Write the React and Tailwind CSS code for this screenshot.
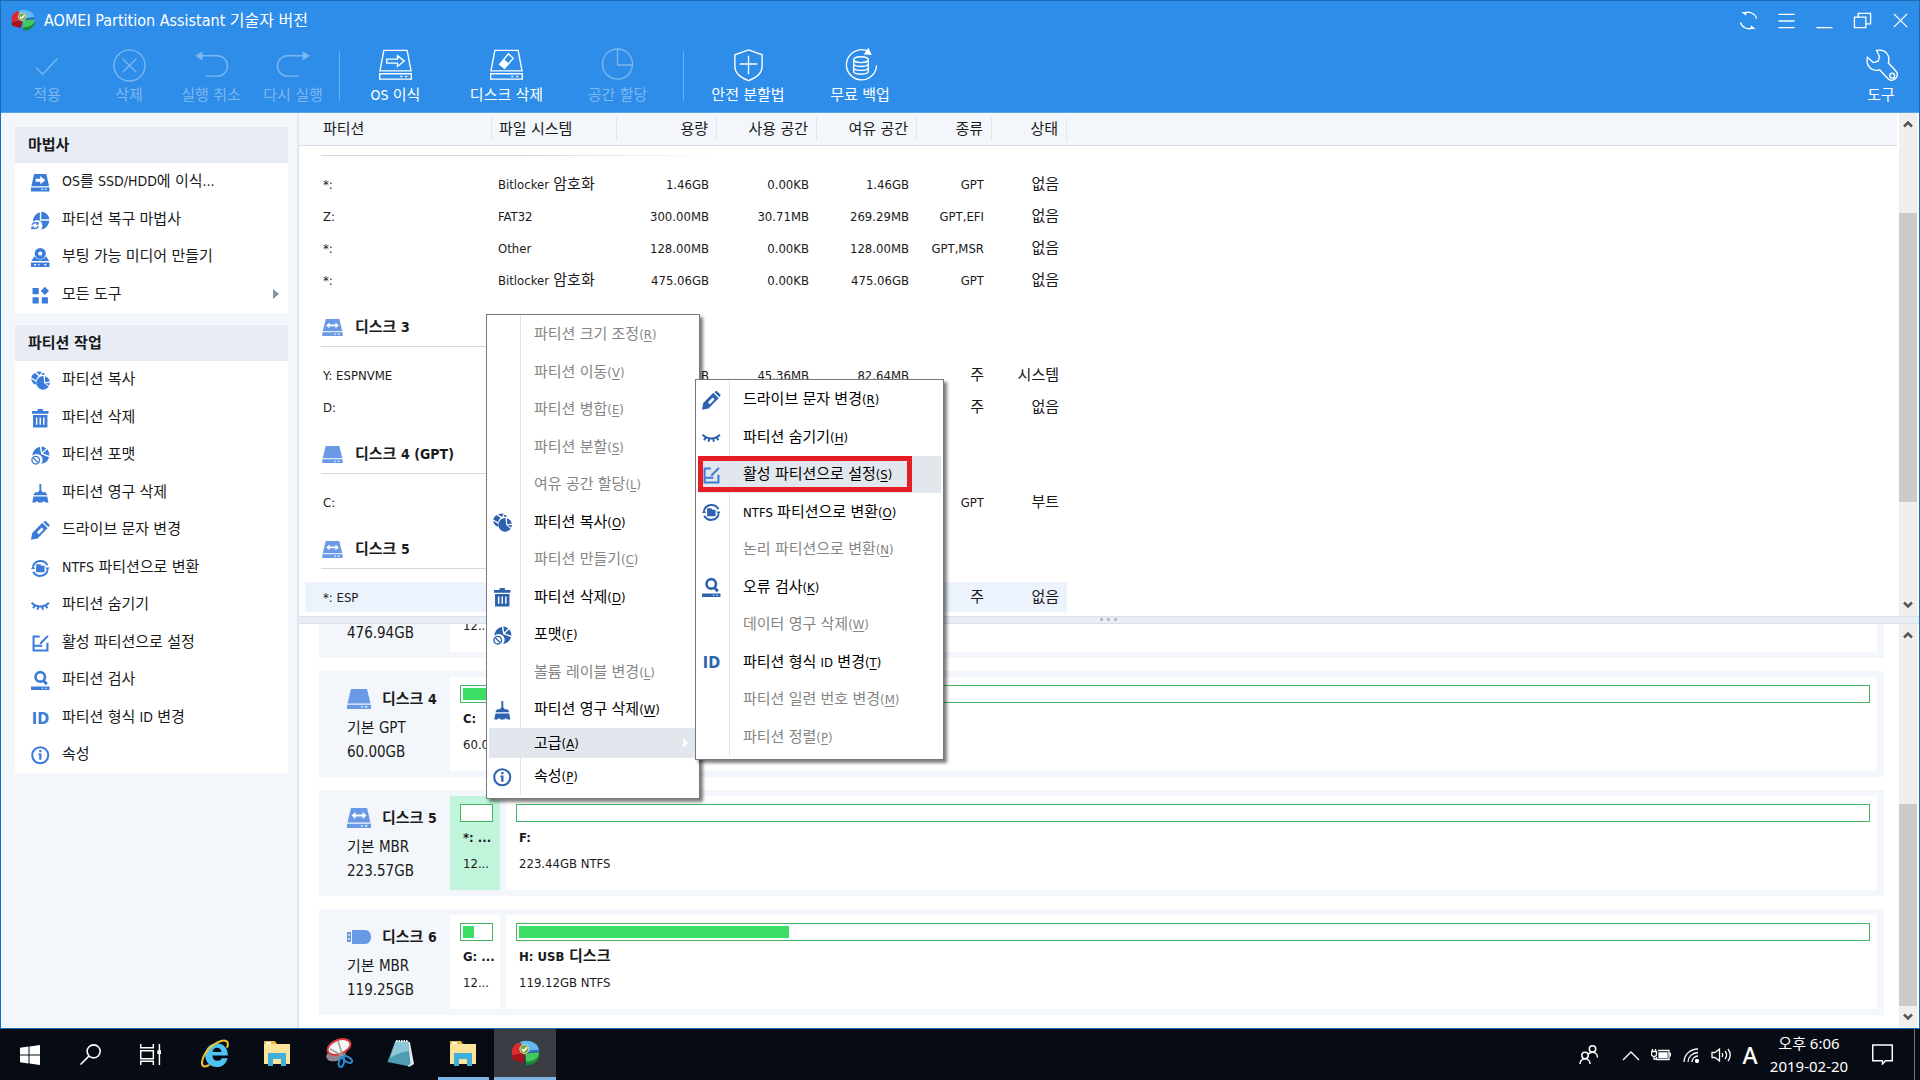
import React, { useState } from 'react';

const LATIN_RUN = /([\x21-\x7e]+(?: [\x21-\x7e]+)*)/;

// Latin letters are set a little smaller than the Hangul around them
const Mixed = ({ text, latin = 'text-[13px]' }) =>
  text.split(LATIN_RUN).map((part, i) =>
    i % 2 ? (
      <span key={i} className={latin}>{part}</span>
    ) : (
      part
    )
  );

const icons = {
  osDrive: (
    <>
      <path fill="currentColor" fillRule="evenodd" d="M3 1h12l2.600 12H.4zM4.500 5.500v3h4.500V11L14 7 9 3v2.500z" />
      <path fill="currentColor" fillRule="evenodd" d="M0 14h18v4H0zm10 1.400v1.200h1.600v-1.200zm3.400 0v1.200H15v-1.200z" />
    </>
  ),
  pieWizard: (
    <>
      <path fill="currentColor" d="M8.600 1.200v8.200h9.200A9 9 0 0 1 9.600 18 5 5 0 0 0 2 10.400a9 9 0 0 1 6.600-9.200z" />
      <path fill="currentColor" d="M10 .8a8.400 8.400 0 0 1 8 7.200h-8z" />
      <path fill="none" stroke="currentColor" strokeWidth="1.300" d="M1 13.600a3.200 3.200 0 0 1 5.400-1.200M7 14.600a3.200 3.200 0 0 1-5.400 1.400M6.800 10.800v2H5M1 18v-2.200h2" />
    </>
  ),
  media: (
    <>
      <path fill="currentColor" fillRule="evenodd" d="M9 0a5.400 5.400 0 1 1 0 10.800A5.400 5.400 0 0 1 9 0zm0 3.400a2 2 0 1 0 0 4 2 2 0 0 0 0-4z" />
      <path fill="currentColor" d="M3.200 8a7 7 0 0 0 11.600 0l2.800 4.600H.4z" />
      <path fill="currentColor" fillRule="evenodd" d="M0 14h18v4.500H0zm3 1.500v1.500h1.800v-1.500zm4 0v1.500h1.200v-1.500zm6 0v1.500h1.800v-1.500z" />
    </>
  ),
  tiles: (
    <path fill="currentColor" d="M1.500 2h6v6h-6zM1.500 11h6v6h-6zM10.500 11h6v6h-6zM13.500.8l4 4-4 4-4-4z" />
  ),
  copy: (
    <>
      <path fill="currentColor" d="M5 1.200A7 7 0 0 1 10.400 1L8.600 4zM3.800 2 7.400 4.800A7 7 0 0 0 5 9L.2 6.400A6.500 6.500 0 0 1 3.800 2zM.2 7.600l4.600 2.800.4 3A6.600 6.600 0 0 1 .2 7.600zM11.300 1.500a6 6 0 0 1 2.500 2L10.400 4z" />
      <path fill="currentColor" d="M12.200 5a6.600 6.600 0 1 0 5 10.400l-4.400-3.600z" />
      <path fill="currentColor" d="M13.600 5a6.600 6.600 0 0 1 4.700 5.200l-4.500.8zM14 12.200l4.400-.8a6 6 0 0 1-.7 2.600z" />
    </>
  ),
  trash: (
    <>
      <path fill="currentColor" d="M6.500 0h5v2H17v2.600H1V2h5.500z" />
      <path fill="currentColor" fillRule="evenodd" d="M2 5.800h14V18H2zm2.800 2.400v7.200h1.400V8.200zm3.500 0v7.200h1.400V8.200zm3.500 0v7.200h1.400V8.200z" />
    </>
  ),
  format: (
    <>
      <path fill="currentColor" d="M8.500.8 10 8l7.600 3A9 9 0 0 1 9.800 17.400 5.200 5.200 0 0 0 1.400 9.600 9 9 0 0 1 8.500.8zM10 .6a8.800 8.800 0 0 1 4.800 1.800L11 6zM15.800 3.200A9 9 0 0 1 18 9.600L11.600 7.200z" />
      <circle cx="4.600" cy="13.800" r="3.700" fill="none" stroke="currentColor" strokeWidth="1.300" />
      <path stroke="currentColor" strokeWidth="1.300" d="m2.400 11.600 4.400 4.400" />
    </>
  ),
  broom: (
    <path fill="currentColor" d="M8.200 0h1.800v6l1.400 2h2.800l1.800 3H2.200L4 8h2.800l1.400-2zM2.400 12.200h13.400L17 18h-3l-1.500-1.400L11 18H7.300l-1.500-1.400L4.300 18H1.200z" />
  ),
  pencil: (
    <path fill="currentColor" fillRule="evenodd" d="M12.200 1.200 13.400 0h1L18 3.600v1L16.800 5.800zM11 1.800 16.200 7 6.400 17 0 18.200 1.200 11.800zM10.400 6.400 5.800 11l1.800 1.800 4.600-4.600z" />
  ),
  convert: (
    <>
      <path fill="none" stroke="currentColor" strokeWidth="2" d="M2 7.200A7.600 7.600 0 0 1 16 6M16.200 11A7.600 7.600 0 0 1 2.200 12.400" />
      <path fill="currentColor" d="M0 9.800h4L2 6.400zM14 8.200h4l-2 3.600zM5 5.200H9l1.200 1.400h3v6.400H5z" />
    </>
  ),
  lash: (
    <path fill="none" stroke="currentColor" strokeWidth="2" d="M.6 6.600C5 11.400 13 11.400 17.400 6.600M3.800 9 2 12M7 10.400l-.6 3M11 10.400l.6 3M14.200 9l1.800 3" />
  ),
  edit: (
    <path fill="none" stroke="currentColor" strokeWidth="2" d="M8.500 2.500H2.500v13.500h13.500V8.500M2.500 11.500h8.500M9 9.500l7.500-7.700" />
  ),
  check: (
    <>
      <circle cx="9" cy="5.800" r="4.600" fill="none" stroke="currentColor" strokeWidth="2.600" />
      <path stroke="currentColor" strokeWidth="2.800" d="m12 9.200 3.400 3.600" />
      <path fill="currentColor" fillRule="evenodd" d="M0 15h18v3.400H0zm10.500 1.200v1h1.500v-1zm3.500 0v1h1.500v-1z" />
    </>
  ),
  info: (
    <>
      <circle cx="9" cy="9" r="7.800" fill="none" stroke="currentColor" strokeWidth="2" />
      <path fill="currentColor" d="M8 4h2.200v2.200H8zM7.200 7.400h3v6H8V9h-.8z" />
    </>
  ),
};

const Icon = ({ name }) => {
  if (name === 'id') {
    return <span className="w-[19px] text-center font-['DejaVu_Sans_Condensed'] text-[16px] leading-[19px] font-bold">ID</span>;
  }
  return (
    <svg viewBox="0 0 18.500 18.500" className="size-[19px] shrink-0" aria-hidden="true">
      {icons[name]}
    </svg>
  );
};

const Logo = ({ className }) => (
  <svg viewBox="0 0 26 24" className={className} aria-hidden="true">
    <path fill="#a8121a" d="M12 12 .8 14v4L10 21l2-5z" />
    <path fill="#e0282f" d="M12 11.500.8 14.300C-1 8 3 3.500 7.500 2z" />
    <path fill="#62b8f0" d="M7.800 1.900C15-1 24 2 25.500 9L13 11z" />
    <path fill="#2b6fb4" d="m15 10 10.500-1v3L16 13z" />
    <path fill="#45c95c" d="m13 12.500 12.500-1C26 17 21 21 13.500 21z" />
    <path fill="#178a38" d="M13.500 20c6 0 11-2.500 12-7v3c-1.500 4.500-6 7.500-12 7.500z" />
    <circle cx="12" cy="8.500" r="4.200" fill="#7ba53f" stroke="#d9e8c3" strokeWidth=".8" />
    <path fill="none" stroke="#fff" strokeWidth="1.600" d="m9.800 8.400 1.700 1.700 3-3.400" />
  </svg>
);

const DiskIcon = ({ kind, className }) => (
  <svg viewBox="0 0 24 20" className={className} aria-hidden="true">
    {kind === 'usb' ? (
      <>
        <path fill="#6a9ae6" d="M5 3h13c8 0 8 14 0 14H5z" />
        <path fill="#6a9ae6" fillRule="evenodd" d="M0 5h4v10H0zm1.200 2v1.800h1.500V7zm0 4v1.800h1.500V11z" />
      </>
    ) : (
      <>
        <path fill="#6a9ae6" d="M4 0h16l3.500 14.500H.5z" />
        <path fill="#6a9ae6" fillRule="evenodd" d="M0 15.700h24V20H0zm14 1.600v1.200h2v-1.200zm4 0v1.200h2.500v-1.200z" />
        {kind === 'mbr' && (
          <path fill="#fff" d="m4.500 7.500 4-3.500v2.500h7V4l4 3.500-4 3.500V8.500h-7V11z" />
        )}
      </>
    )}
  </svg>
);

const toolIcons = {
  apply: <path d="m5 19 7 7L27 10" />,
  discard: (
    <>
      <circle cx="17" cy="17" r="16" />
      <path d="m10 10 14 14M24 10 10 24" />
    </>
  ),
  undo: (
    <>
      <path d="M7 7h16a10.500 10.500 0 0 1 0 21H11" />
      <path fill="currentColor" d="M1.500 7 7 3.500v7z" />
    </>
  ),
  redo: (
    <>
      <path d="M27 7H11a10.500 10.500 0 0 0 0 21h12" />
      <path fill="currentColor" d="M32.500 7 27 3.500v7z" />
    </>
  ),
  migrate: (
    <>
      <path d="M5 1.500h24l4 21H1zM.7 25.500h32.600v5.500H.7zM22 28.300h2M27 28.300h2" />
      <path d="M8 10.500h11V7l7 5.500-7 5.500v-3.500H8z" />
    </>
  ),
  wipe: (
    <>
      <path d="M5 1.500h24l4 21H1zM.7 25.500h32.600v5.500H.7zM22 28.300h2M27 28.300h2" />
      <path d="m19 5 5 4.500-9 10.500-5-4z" />
      <path fill="currentColor" d="m14.500 11.500 4 3.500-3.500 4-4-3.500z" />
    </>
  ),
  allocate: (
    <>
      <circle cx="17" cy="15.500" r="15.500" />
      <path d="M17 0v16.500h15" />
    </>
  ),
  safe: <path d="M17 1 31 6v12c0 7-7 12-14 14.500C10 30 3 25 3 18V6zM17 7v19M8 15.500h18" />,
  backup: (
    <>
      <path d="M26 3A15.500 15.500 0 1 0 33.500 17" />
      <path fill="currentColor" d="m25 0 2.500 5.500-6-.5z" />
      <ellipse cx="17.500" cy="11" rx="7.500" ry="3" />
      <path d="M10 11v12c0 4 15 4 15 0V11M10 15c0 4 15 4 15 0M10 19c0 4 15 4 15 0" />
    </>
  ),
  tools: (
    <>
      <path d="M12 1.500c9-2 14.500 5 12 13l8 8.500c4 5-3 12-8 8L15 21.500C6.500 24 .5 17 2.500 8.500l6 5.500 5-1.500 1.500-4.500z" />
      <circle cx="28" cy="27.500" r="2.500" />
    </>
  ),
};

const ToolButton = ({ icon, label, disabled, className }) => (
  <button
    type="button"
    disabled={disabled}
    className={`flex flex-col items-center gap-[2px] ${disabled ? 'text-[#7cb7f1]' : 'text-white'} ${className}`}
  >
    <svg
      viewBox="-1 -1 36 35"
      className="h-[34px] w-[35px]"
      fill="none"
      stroke="currentColor"
      strokeWidth="1.400"
      aria-hidden="true"
    >
      {toolIcons[icon]}
    </svg>
    <span className="text-[15px] leading-[22px] whitespace-nowrap"><Mixed text={label} latin="text-[14px]" /></span>
  </button>
);

const Toolbar = () => (
  <div className="flex items-start pt-[9px] pb-[6px] pl-[5px]">
    <ToolButton icon="apply" label="적용" disabled className="w-[82px]" />
    <ToolButton icon="discard" label="삭제" disabled className="w-[82px]" />
    <ToolButton icon="undo" label="실행 취소" disabled className="w-[82px]" />
    <ToolButton icon="redo" label="다시 실행" disabled className="w-[82px]" />
    <div className="mt-[3px] ml-[5px] h-[50px] w-px bg-[#6cb0f2]" />
    <ToolButton icon="migrate" label="OS 이식" className="w-[111px]" />
    <ToolButton icon="wipe" label="디스크 삭제" className="w-[111px]" />
    <ToolButton icon="allocate" label="공간 할당" disabled className="w-[111px]" />
    <div className="mt-[3px] mr-2 ml-[10px] h-[50px] w-px bg-[#6cb0f2]" />
    <ToolButton icon="safe" label="안전 분할법" className="w-[112px]" />
    <ToolButton icon="backup" label="무료 백업" className="w-[112px]" />
    <ToolButton icon="tools" label="도구" className="ml-auto w-[76px]" />
  </div>
);

const captionIcons = [
  ['새로 고침', (
    <>
      <path d="M1.500 12a9 9 0 0 0 13 5.500M18.500 8a9 9 0 0 0-13-5.500" />
      <path fill="currentColor" stroke="none" d="M2.500 1h5v4zM17.500 19h-5v-4z" />
    </>
  )],
  ['메뉴', <path d="M1.500 3.500h17M1.500 10.500h17M1.500 17.500h17" />],
  ['최소화', <path d="M1.500 17.500h17" />],
  ['이전 크기로', <path d="M1.500 6.500h12v11h-12zM5.500 6V2.500h13v11H14" />],
  ['닫기', <path d="m3 3 14 14M17 3 3 17" />],
];

const TitleBar = () => (
  <div className="flex h-[38px] items-center pl-[9px] text-white">
    <Logo className="h-[22px] w-[26px]" />
    <h1 className="ml-2 pt-[2px] text-[16px] leading-[24px]">AOMEI Partition Assistant 기술자 버전</h1>
    <div className="ml-auto flex">
      {captionIcons.map(([label, shape]) => (
        <button key={label} type="button" aria-label={label} className="flex h-[38px] w-[38px] items-center justify-center">
          <svg viewBox="0 0 20 20" className="size-[19px]" fill="none" stroke="currentColor" strokeWidth="1.400">
            {shape}
          </svg>
        </button>
      ))}
    </div>
  </div>
);

const wizards = [
  { icon: 'osDrive', label: 'OS를 SSD/HDD에 이식...' },
  { icon: 'pieWizard', label: '파티션 복구 마법사' },
  { icon: 'media', label: '부팅 가능 미디어 만들기' },
  { icon: 'tiles', label: '모든 도구', more: true },
];

const operations = [
  { icon: 'copy', label: '파티션 복사' },
  { icon: 'trash', label: '파티션 삭제' },
  { icon: 'format', label: '파티션 포맷' },
  { icon: 'broom', label: '파티션 영구 삭제' },
  { icon: 'pencil', label: '드라이브 문자 변경' },
  { icon: 'convert', label: 'NTFS 파티션으로 변환' },
  { icon: 'lash', label: '파티션 숨기기' },
  { icon: 'edit', label: '활성 파티션으로 설정' },
  { icon: 'check', label: '파티션 검사' },
  { icon: 'id', label: '파티션 형식 ID 변경' },
  { icon: 'info', label: '속성' },
];

const SidePanel = ({ title, items }) => (
  <section>
    <h2 className="bg-[#e8ecf4] pl-[13px] text-[15px] leading-[36px] font-bold">{title}</h2>
    <ul className="bg-white">
      {items.map((item) => (
        <li key={item.label} className="h-[37px] even:h-[38px]">
          <button type="button" className="flex h-full w-full items-center pl-4 text-left text-[15px]">
            <span className="flex pt-[2px] text-[#3b7cd9]"><Icon name={item.icon} /></span>
            <span className="ml-[12px] whitespace-nowrap"><Mixed text={item.label} latin="text-[14px]" /></span>
            {item.more && (
              <span className="mr-[9px] ml-auto border-y-[5px] border-l-[6px] border-transparent border-l-[#8592a3]" />
            )}
          </button>
        </li>
      ))}
    </ul>
  </section>
);

const columns = [
  { label: '파티션', width: 'w-[193px]' },
  { label: '파일 시스템', width: 'w-[125px]' },
  { label: '용량', width: 'w-[100px]', right: true },
  { label: '사용 공간', width: 'w-[100px]', right: true },
  { label: '여유 공간', width: 'w-[100px]', right: true },
  { label: '종류', width: 'w-[75px]', right: true },
  { label: '상태', width: 'w-[75px]', right: true },
];

const groups = [
  {
    rows: [
      ['*:', 'Bitlocker 암호화', '1.46GB', '0.00KB', '1.46GB', 'GPT', '없음'],
      ['Z:', 'FAT32', '300.00MB', '30.71MB', '269.29MB', 'GPT,EFI', '없음'],
      ['*:', 'Other', '128.00MB', '0.00KB', '128.00MB', 'GPT,MSR', '없음'],
      ['*:', 'Bitlocker 암호화', '475.06GB', '0.00KB', '475.06GB', 'GPT', '없음'],
    ],
  },
  {
    disk: '디스크 3',
    kind: 'mbr',
    rows: [
      ['Y: ESPNVME', '', '128.00MB', '45.36MB', '82.64MB', '주', '시스템'],
      ['D:', '', '', '', '', '주', '없음'],
    ],
  },
  { disk: '디스크 4 (GPT)', kind: 'gpt', rows: [['C:', '', '', '', '', 'GPT', '부트']] },
  { disk: '디스크 5', kind: 'mbr', rows: [['*: ESP', '', '', '', '', '주', '없음']], selected: true },
];

const PartitionTable = () => (
  <table className="w-full table-fixed border-collapse text-[15px]">
    <thead className="h-[32px] border-b border-[#d5dce6] bg-[#f3f6fb]">
      <tr>
        {columns.map((col, i) => (
          <th key={col.label} className={`p-0 font-normal ${col.width}`}>
            <div
              className={`h-[24px] border-r border-[#e1e6ee] leading-[24px] ${
                col.right ? 'pr-[8px] text-right' : i === 0 ? 'pl-[24px] text-left' : 'pl-[7px] text-left'
              }`}
            >
              {col.label}
            </div>
          </th>
        ))}
        <th className="p-0" />
      </tr>
    </thead>
    {groups.map((group, g) => (
      <tbody key={g}>
        <tr>
          <th colSpan={8} className="p-0 pb-[12px] text-left">
            <div className={group.disk ? 'flex h-[50px] items-center pt-[13px] pl-[23px]' : 'h-[9px]'}>
              {group.disk && (
                <>
                  <DiskIcon kind={group.kind} className="h-[17px] w-[21px]" />
                  <span className="ml-3 font-bold"><Mixed text={group.disk} latin="text-[14px]" /></span>
                </>
              )}
            </div>
            <div className="ml-[22px] h-px w-[400px] bg-linear-to-r from-[#d3d9e3] from-50% to-white" />
          </th>
        </tr>
        {group.rows.map((row, r) => (
          <tr key={r} className="h-[32px]">
            {row.map((value, i) => (
              <td key={i} className="p-0">
                <div
                  className={`h-[30px] leading-[30px] whitespace-nowrap ${group.selected ? 'bg-[#edf3fd]' : ''} ${
                    i > 1 ? 'pr-[8px] text-right' : i === 0 ? 'ml-[6px] pl-[18px]' : 'pl-[6px]'
                  }`}
                >
                  <Mixed text={value} />
                </div>
              </td>
            ))}
          </tr>
        ))}
      </tbody>
    ))}
  </table>
);

const ScrollBar = ({ start, size }) => (
  <div className="mr-[2px] flex w-[18px] shrink-0 flex-col bg-[#efefef]">
    <button type="button" aria-label="위로" className="flex h-[22px] items-center justify-center text-[#555]">
      <svg viewBox="0 0 10 8" className="h-2 w-[10px]" fill="none" stroke="currentColor" strokeWidth="2.500">
        <path d="m1 6.500 4-4 4 4" />
      </svg>
    </button>
    <div className="flex-1">
      <div style={{ height: `${start}%` }} />
      <div className="bg-[#cbcbcb]" style={{ height: `${size}%` }} />
    </div>
    <button type="button" aria-label="아래로" className="flex h-[22px] items-center justify-center text-[#555]">
      <svg viewBox="0 0 10 8" className="h-2 w-[10px]" fill="none" stroke="currentColor" strokeWidth="2.500">
        <path d="m1 1.500 4 4 4-4" />
      </svg>
    </button>
  </div>
);

// the first disk is scrolled half out of view, only its last lines show
const disks = [
  {
    size: '476.94GB',
    parts: [{ size: '12...', used: 0, small: true }, { used: 0 }],
  },
  { name: '디스크 4', kind: 'gpt', type: '기본 GPT', size: '60.00GB', parts: [{ name: 'C:', size: '60.00GB', used: 20 }] },
  {
    name: '디스크 5',
    kind: 'mbr',
    type: '기본 MBR',
    size: '223.57GB',
    parts: [
      { name: '*: ...', size: '12...', used: 0, small: true, selected: true },
      { name: 'F:', size: '223.44GB NTFS', used: 0 },
    ],
  },
  {
    name: '디스크 6',
    kind: 'usb',
    type: '기본 MBR',
    size: '119.25GB',
    parts: [
      { name: 'G: ...', size: '12...', used: 42, small: true },
      { name: 'H: USB 디스크', size: '119.12GB NTFS', used: 20 },
    ],
  },
];

const DiskCard = ({ disk }) => (
  <article className="flex h-[106px] shrink-0 gap-[6px] bg-[#f3f6fb] py-[6px] pr-[7px]">
    <div className="w-[125px] pt-[7px] pl-[28px] text-[15px] leading-[24px]">
      <h3 className="mb-[2px] flex h-[30px] items-center gap-[11px] leading-[30px] font-bold whitespace-nowrap">
        {disk.name && (
          <>
            <DiskIcon kind={disk.kind} className="h-[20px] w-[24px] shrink-0" />
            <span><Mixed text={disk.name} latin="text-[14px]" /></span>
          </>
        )}
      </h3>
      <p className="h-[24px]">{disk.type}</p>
      <p>{disk.size}</p>
    </div>
    {disk.parts.map((part, i) => (
      <div
        key={i}
        className={`pt-[8px] pr-[7px] pl-[10px] text-[15px] leading-[24px] ${part.small ? 'w-[50px]' : 'flex-1'} ${
          part.selected ? 'bg-[#c0f5db]' : 'bg-white'
        }`}
      >
        <div className="h-[18px] border border-[#45b562] bg-white p-[2px]">
          <div className="h-full bg-[#3adf63]" style={{ width: `${part.used}%` }} />
        </div>
        <p className="mt-[3px] h-[24px] pl-[3px] font-bold whitespace-nowrap">
          <Mixed text={part.name ?? ''} />
        </p>
        <p className="mt-[2px] h-[24px] pl-[3px] whitespace-nowrap">
          <Mixed text={part.size ?? ''} />
        </p>
      </div>
    ))}
  </article>
);

const contextMenu = [
  { label: '파티션 크기 조정', hotkey: 'R', disabled: true },
  { label: '파티션 이동', hotkey: 'V', disabled: true },
  { label: '파티션 병합', hotkey: 'E', disabled: true },
  { label: '파티션 분할', hotkey: 'S', disabled: true },
  { label: '여유 공간 할당', hotkey: 'L', disabled: true },
  { label: '파티션 복사', hotkey: 'O', icon: 'copy' },
  { label: '파티션 만들기', hotkey: 'C', disabled: true },
  { label: '파티션 삭제', hotkey: 'D', icon: 'trash' },
  { label: '포맷', hotkey: 'F', icon: 'format' },
  { label: '볼륨 레이블 변경', hotkey: 'L', disabled: true },
  { label: '파티션 영구 삭제', hotkey: 'W', icon: 'broom' },
  { label: '고급', hotkey: 'A', submenu: true },
  { label: '속성', hotkey: 'P', icon: 'info' },
];

const advancedMenu = [
  { label: '드라이브 문자 변경', hotkey: 'R', icon: 'pencil' },
  { label: '파티션 숨기기', hotkey: 'H', icon: 'lash' },
  { label: '활성 파티션으로 설정', hotkey: 'S', icon: 'edit', marked: true },
  { label: 'NTFS 파티션으로 변환', hotkey: 'O', icon: 'convert' },
  { label: '논리 파티션으로 변환', hotkey: 'N', disabled: true },
  { label: '오류 검사', hotkey: 'K', icon: 'check' },
  { label: '데이터 영구 삭제', hotkey: 'W', disabled: true },
  { label: '파티션 형식 ID 변경', hotkey: 'T', icon: 'id' },
  { label: '파티션 일련 번호 변경', hotkey: 'M', disabled: true },
  { label: '파티션 정렬', hotkey: 'P', disabled: true },
];

const Menu = ({ items, className, label }) => (
  <ul
    role="menu"
    aria-label={label}
    className={`absolute border border-[#77797c] bg-white px-[2px] pt-px pb-[3px] text-[15px] shadow-[3px_3px_3px_rgba(0,0,0,0.5)] ${className}`}
  >
    {items.map((item) => (
      <li key={item.label} role="none" className={`relative ${item.submenu ? 'h-[30px]' : 'h-[37px] even:h-[38px]'}`}>
        <button
          type="button"
          role="menuitem"
          disabled={item.disabled}
          className={`flex h-full w-full items-center text-left ${item.disabled ? 'text-[#858585]' : 'text-black'} ${
            item.submenu || item.marked ? 'bg-[#e2e6ed]' : ''
          }`}
        >
          <span
            className={`flex h-full w-[32px] items-center border-r border-[#dfe3e9] pt-px pl-[4px] ${
              item.marked ? 'text-[#3b7cd9]' : 'text-[#2c62ae]'
            }`}
          >
            {item.icon && <Icon name={item.icon} />}
          </span>
          <span className="ml-[13px] whitespace-nowrap">
            <Mixed text={item.label} />
            <span className="text-[13px]">(<u className="underline-offset-2">{item.hotkey}</u>)</span>
          </span>
          {item.submenu && (
            <span className="mr-[9px] ml-auto border-y-[5px] border-l-[5px] border-transparent border-l-white" />
          )}
        </button>
        {item.marked && (
          <span className="pointer-events-none absolute top-0 left-0 h-[36px] w-[214px] border-[5px] border-[#e81c24]" />
        )}
      </li>
    ))}
  </ul>
);

const FolderIcon = () => (
  <svg viewBox="0 0 28 26" className="h-[26px] w-[28px]" aria-hidden="true">
    <path fill="#e9b83c" d="M1 1h11l2 3h13v6H1z" />
    <path fill="#fff" d="M3 2h5v2H3z" />
    <path fill="#fbe39a" d="M1 4h26v20H1z" />
    <path fill="#3fb0dc" d="M5 13h18v13h-5v-7h-8v7H5z" />
  </svg>
);

const taskbarApps = [
  {
    label: 'Internet Explorer',
    icon: (
      <svg viewBox="0 0 28 28" className="size-[29px]" aria-hidden="true">
        <path
          fill="#4cc3f1"
          fillRule="evenodd"
          d="M15 4c7 0 11 5 11 12H11c.3 3.500 2 5 4.700 5 2.300 0 3.600-1 4.300-2.500h5.700C24.500 23.500 21 27 15 27 8.500 27 4 22 4 15.500S8.500 4 15 4zm-3.900 8.500h8.600c-.4-2.800-2-4-4.300-4s-3.800 1.500-4.300 4z"
        />
        <path fill="none" stroke="#f2c230" strokeWidth="2" d="M25 8.500C28 2 23.500-.5 16.500 3 6 8 .5 18 1 24c.5 3.500 4 3 7 1" />
      </svg>
    ),
  },
  { label: '파일 탐색기', icon: <FolderIcon /> },
  {
    label: '캡처 도구',
    icon: (
      <svg viewBox="0 0 28 30" className="h-[30px] w-[28px]" fill="none" aria-hidden="true">
        <ellipse cx="11" cy="17" rx="10" ry="6" fill="#8f8790" transform="rotate(-15 11 17)" />
        <ellipse cx="14" cy="9" rx="12" ry="7" fill="#f5f5f5" stroke="#d63a3f" strokeWidth="2" transform="rotate(-22 14 9)" />
        <path stroke="#9a9a9a" strokeWidth="1.500" d="m13 3 5 16M5 11l15 8" />
        <ellipse cx="16.500" cy="24" rx="2.500" ry="5" stroke="#2d8bd0" strokeWidth="2" transform="rotate(15 16.500 24)" />
        <ellipse cx="22.500" cy="21.500" rx="2.500" ry="5" stroke="#2d8bd0" strokeWidth="2" transform="rotate(-60 22.500 21.500)" />
      </svg>
    ),
  },
  {
    label: '메모장',
    icon: (
      <svg viewBox="0 0 28 28" className="size-[28px]" aria-hidden="true">
        <path fill="#e4e9ea" d="m20 2 3 1.500L27 25l-5 3-3-3z" />
        <path fill="#4f9db2" d="M8.500 2H21l2.500 23-3 2L.5 23z" />
        <path fill="#8cc8d6" d="M8.500 2H21l1 10C16 12 8 16 3 19z" />
        <path stroke="#e8eef0" strokeWidth="2" strokeDasharray="1.500 1" d="M9 2h12" />
      </svg>
    ),
  },
  { label: '파일 탐색기 창', icon: <FolderIcon />, running: true },
  { label: 'AOMEI Partition Assistant', icon: <Logo className="h-[26px] w-[29px]" />, running: true, active: true },
];

const trayIcons = [
  ['숨겨진 아이콘 표시', <path d="m2 15 8-8 8 8" />],
  ['배터리', (
    <>
      <path d="M7 5.500h11v9H5.500V12M18.500 8.500h1v3" />
      <path fill="currentColor" d="M8 8h8v4.500H8z" />
      <path d="M.5 6.500h5V9a2.500 2.500 0 0 1-5 0zM1.500 6V4M4.500 6V4M3 11.500V14h3" />
    </>
  )],
  ['네트워크', (
    <>
      <path d="M3 17C3 10 9 4 17 4M7 17c0-5 4.500-9.500 10-9.500M11 17c0-3 2.500-6 6-6" />
      <circle cx="16" cy="16" r="1.500" fill="currentColor" />
    </>
  )],
  ['볼륨', <path d="M1 7.500h3L8.500 4v12L4 12.500H1zM11 8c1 1.500 1 2.500 0 4M14 6c2 2.500 2 5.500 0 8M17 4c3 4 3 8 0 12" />],
];

const Taskbar = () => (
  <footer className="flex h-[51px] shrink-0 bg-[#070c14] text-white">
    <button type="button" aria-label="시작" className="flex w-[60px] items-center justify-center">
      <svg viewBox="0 0 20 20" className="size-[20px]" fill="currentColor">
        <path d="m0 2.800 8.500-1.200v8H0zM9.500 1.500 20 0v9.600H9.500zM0 10.500h8.500v8L0 17.300zM9.500 10.500H20V20L9.500 18.600z" />
      </svg>
    </button>
    <button type="button" aria-label="검색" className="flex w-[60px] items-center justify-center">
      <svg viewBox="0 0 20 20" className="size-[21px]" fill="none" stroke="currentColor" strokeWidth="1.500">
        <circle cx="13" cy="7" r="6.200" />
        <path d="M8.500 11.500.5 19.500" />
      </svg>
    </button>
    <button type="button" aria-label="작업 보기" className="mr-[4px] flex w-[60px] items-center justify-center">
      <svg viewBox="0 0 20 20" className="size-[21px]" fill="none" stroke="currentColor" strokeWidth="1.400">
        <path d="M.7 0v3.500h12V0M.7 6.500h12v7.500h-12zM.7 20v-3.500h12V20M18.500 0v20" />
        <path fill="currentColor" stroke="none" d="M16.500 6h4v3.500h-4z" />
      </svg>
    </button>
    {taskbarApps.map((app) => (
      <button
        key={app.label}
        type="button"
        aria-label={app.label}
        className={`flex w-[62px] flex-col items-center ${app.active ? 'bg-[#3a3e44]' : ''}`}
      >
        <span className="flex flex-1 items-center">{app.icon}</span>
        <span className={`h-[3px] ${app.active ? 'w-full' : 'w-[51px]'} ${app.running ? 'bg-[#7fb5e6]' : ''}`} />
      </button>
    ))}
    <div className="ml-auto flex items-center">
      <button type="button" aria-label="피플" className="flex w-[54px] justify-center">
        <svg viewBox="0 0 20 20" className="size-[20px]" fill="none" stroke="currentColor" strokeWidth="1.500">
          <circle cx="13.500" cy="4" r="3.200" />
          <circle cx="6" cy="10.500" r="3.200" />
          <path d="M1 19c0-3 2-5.300 5-5.300s5 2.300 5 5.300M9 9.500c1-1.500 2.500-2.300 4.500-2.300 3 0 5 2.300 5 5.300" />
        </svg>
      </button>
      {trayIcons.map(([label, shape]) => (
        <button key={label} type="button" aria-label={label} className="flex w-[30px] justify-center">
          <svg viewBox="0 0 20 20" className="size-[20px]" fill="none" stroke="currentColor" strokeWidth="1.300">
            {shape}
          </svg>
        </button>
      ))}
      <button type="button" className="w-[28px] font-['Noto_Sans'] text-[23px] leading-[30px] font-medium">A</button>
      <div className="w-[90px] text-center font-['Noto_Sans','Noto_Sans_CJK_KR',sans-serif] text-[15px] leading-[23px]">
        <p>오후 6:06</p>
        <p>2019-02-20</p>
      </div>
      <button type="button" aria-label="알림 센터" className="flex w-[56px] justify-center">
        <svg viewBox="0 0 20 20" className="size-[21px]" fill="none" stroke="currentColor" strokeWidth="1.400">
          <path d="M.7 1h18.600v15H13l-3 3v-3H.7z" />
        </svg>
      </button>
      <div className="mr-[5px] ml-1 h-[51px] w-px bg-[#6d7278]" />
    </div>
  </footer>
);

const App = () => {
  const [menuOpen, setMenuOpen] = useState(true);

  return (
    <div className="flex h-screen flex-col overflow-hidden bg-white font-['DejaVu_Sans_Condensed','Noto_Sans_CJK_KR',sans-serif] text-[#1a1a1a]">
      <div
        className="relative flex min-h-0 flex-1 flex-col border border-[#1a6cb8]"
        onKeyDown={(e) => e.key === 'Escape' && setMenuOpen(false)}
      >
        <header className="border-b border-[#5ba2e4] bg-[#2e8de8]">
          <TitleBar />
          <Toolbar />
        </header>

        <div className="flex min-h-0 flex-1">
          <aside className="flex w-[298px] shrink-0 flex-col gap-[12px] overflow-hidden border-r-2 border-[#e2e7ee] bg-[#f3f6fb] pt-[14px] pr-[9px] pl-[14px]">
            <SidePanel title="마법사" items={wizards} />
            <SidePanel title="파티션 작업" items={operations} />
          </aside>

          <main className="flex min-w-0 flex-1 flex-col">
            <div className="flex shrink-0">
              <div className="min-w-0 flex-1 pr-[2px] pb-[3px]">
                <PartitionTable />
              </div>
              <ScrollBar start={17} size={63} />
            </div>
            <div className="flex h-[8px] shrink-0 items-center justify-center gap-1 border-y border-[#d9e0ea] bg-[#e9eef6] pr-[2px]">
              <span className="size-[3px] bg-[#b3bbc8]" />
              <span className="size-[3px] bg-[#b3bbc8]" />
              <span className="size-[3px] bg-[#b3bbc8]" />
            </div>
            <div className="flex min-h-0 flex-1">
              <div className="flex min-w-0 flex-1 flex-col justify-end gap-[13px] overflow-hidden pr-[15px] pb-[13px] pl-[20px]">
                {disks.map((disk) => (
                  <DiskCard key={disk.size} disk={disk} />
                ))}
              </div>
              <ScrollBar start={44} size={56} />
            </div>
          </main>
        </div>

        {menuOpen && (
          <>
            <Menu items={contextMenu} label="파티션" className="top-[313px] left-[485px] w-[214px]" />
            <Menu items={advancedMenu} label="고급" className="top-[378px] left-[694px] w-[249px]" />
          </>
        )}
      </div>
      <Taskbar />
    </div>
  );
};

export default App;
